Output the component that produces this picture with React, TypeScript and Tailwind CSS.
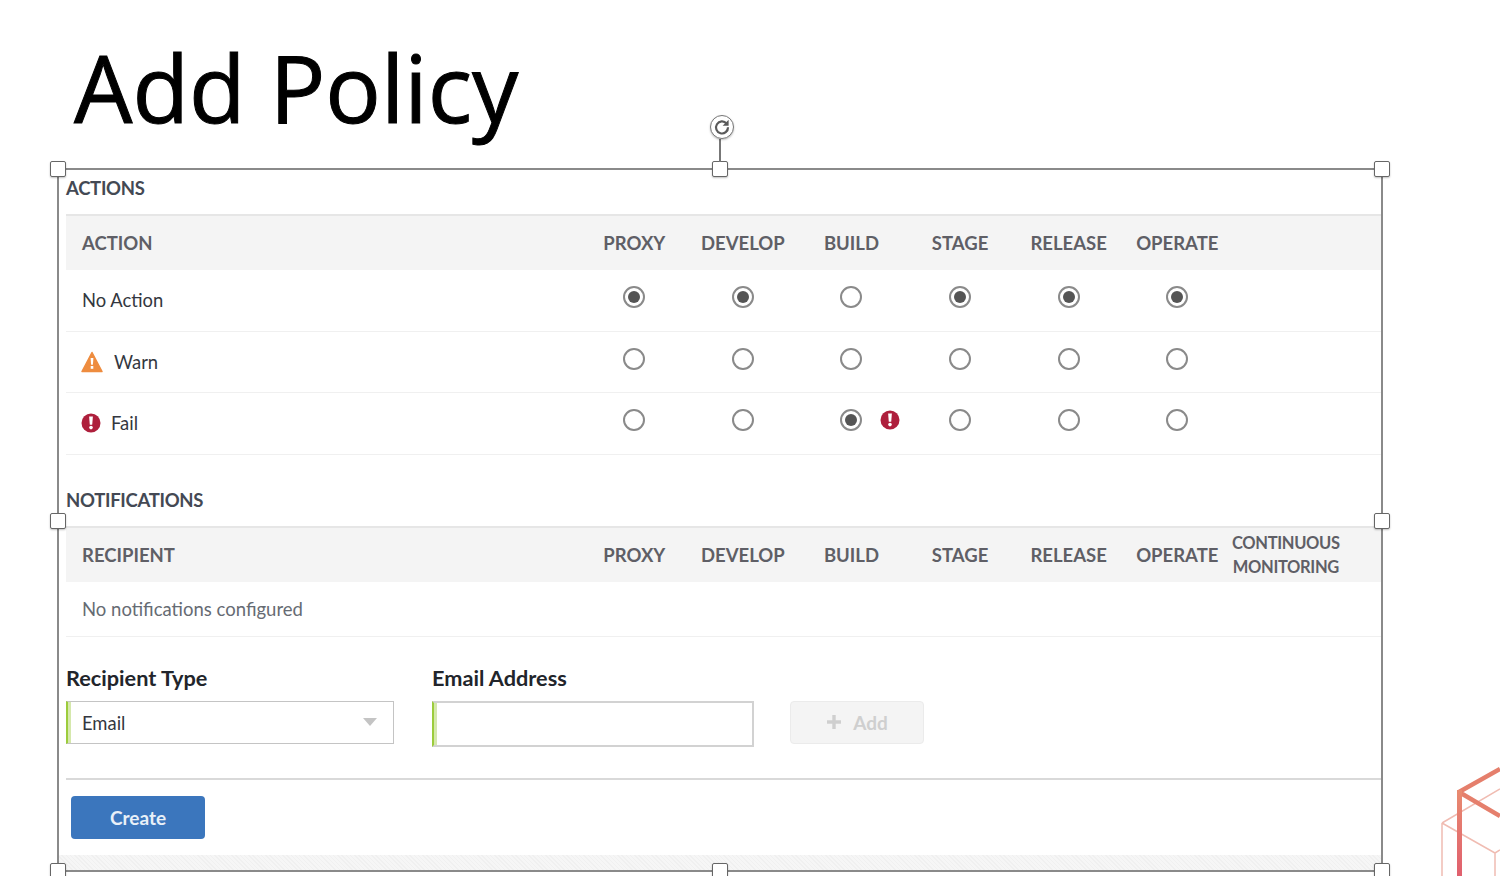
const sans = "font-['Lato','Open_Sans',sans-serif]";

function Radio({ on }: { on?: boolean }) {
  return (
    <span className="flex h-[22px] w-[22px] items-center justify-center rounded-full border-2 border-[#8a8a8a] bg-white">
      {on ? <span className="h-[12px] w-[12px] rounded-full bg-[#555555]" /> : null}
    </span>
  );
}

function FailIcon({ size = 20 }: { size?: number }) {
  return (
    <svg width={size} height={size} viewBox="0 0 20 20" className="shrink-0">
      <circle cx="10" cy="10" r="9.5" fill="#ae1f3c" />
      <path d="M8.1 3.6h3.8l-.7 8.2H8.8z" fill="#fff" />
      <circle cx="10" cy="14.6" r="1.8" fill="#fff" />
    </svg>
  );
}

function WarnIcon() {
  return (
    <svg width="22" height="22" viewBox="0 0 22 22" className="shrink-0">
      <path d="M11 1.5 21 20.5H1z" fill="#ee8c3f" stroke="#ee8c3f" strokeWidth="1.5" strokeLinejoin="round" />
      <path d="M9.6 7h2.8l-.5 6.8h-1.8z" fill="#fff" />
      <rect x="9.7" y="15" width="2.6" height="2.8" fill="#fff" />
    </svg>
  );
}

function Handle({ className }: { className: string }) {
  return (
    <span className={"absolute h-[16px] w-[16px] rounded-[2px] border border-[#666666] bg-white shadow-[0_1px_2px_rgba(0,0,0,0.25)] " + className} />
  );
}

const stages = ["PROXY", "DEVELOP", "BUILD", "STAGE", "RELEASE", "OPERATE"];

function HeaderRow({ first, extra }: { first: string; extra?: boolean }) {
  return (
    <div className="flex h-[56px] items-center border-t-2 border-[#e6e6e6] bg-[#f4f4f4] pt-[2px] text-[18.5px] font-bold text-[#5f5f66]">
      <div className="w-[514px] pl-[16px]">{first}</div>
      {stages.map((s) => (
        <div key={s} className="w-[108.6px] text-center">{s}</div>
      ))}
      {extra ? (
        <div className="mt-[-2px] w-[108.6px] text-center text-[16.5px] leading-[24px] tracking-[-0.35px]">CONTINUOUS<br />MONITORING</div>
      ) : null}
    </div>
  );
}

function ActionRow({ label, icon, on, flag, tight }: { label: string; icon?: React.ReactNode; on: number[]; flag?: boolean; tight?: boolean }) {
  return (
    <div className="flex h-[61.5px] items-center border-b border-[#f0f0f0] text-[18.4px] text-[#333740]">
      <div className="flex w-[514px] items-center pl-[15px]">
        {icon}
        <span className={tight ? "ml-[10px] mt-[2px]" : icon ? "ml-[11px] mt-[2px]" : "ml-[1px] mt-[2px]"}>{label}</span>
      </div>
      {stages.map((s, i) => (
        <div key={s} className="relative mt-[-6px] flex w-[108.6px] justify-center">
          <Radio on={on.includes(i)} />
          {flag && i === 2 ? (
            <span className="absolute left-[83px] top-[1px]"><FailIcon /></span>
          ) : null}
        </div>
      ))}
    </div>
  );
}

export default function App() {
  return (
    <div className={"relative h-[876px] w-[1500px] overflow-hidden bg-white " + sans}>
      <h1 className="h-[168px] pl-[74px] pt-[29px] font-['Open_Sans',sans-serif] text-[92.5px] leading-[116px] font-medium text-black [-webkit-text-stroke:1px_black]">Add Policy</h1>

      <div className="relative ml-[57px] h-[704px] w-[1326px] border-2 border-[#8a8a8a] pl-[7px]">
        <div className="absolute bottom-0 left-0 right-0 h-[15px] bg-[repeating-linear-gradient(45deg,#f0f0f0_0,#f0f0f0_1px,#f6f6f6_1px,#f6f6f6_3px)]" />
        <Handle className="left-[-9px] top-[-9px]" />
        <Handle className="left-[653px] top-[-9px]" />
        <Handle className="right-[-9px] top-[-9px]" />
        <Handle className="left-[-9px] top-[343px]" />
        <Handle className="right-[-9px] top-[343px]" />
        <Handle className="left-[-9px] bottom-[-9px]" />
        <Handle className="left-[653px] bottom-[-9px]" />
        <Handle className="right-[-9px] bottom-[-9px]" />
        <span className="absolute left-[660px] top-[-31px] h-[23px] w-[2px] bg-[#777777]" />
        <span className="absolute left-[651px] top-[-55px] flex h-[24px] w-[24px] items-center justify-center rounded-full border border-[#777777] bg-white shadow-[0_1px_2px_rgba(0,0,0,0.25)]">
          <svg width="18" height="18" viewBox="0 0 18 18" fill="none">
            <path d="M13.6 5.6A6 6 0 1 0 15 9.2" stroke="#5a5a5a" strokeWidth="2.2" />
            <path d="M15.6 1.8v6h-6z" fill="#5a5a5a" />
          </svg>
        </span>

        <div className="flex h-[44px] items-center pb-[6px] text-[18.5px] font-bold tracking-[-0.3px] text-[#444954]">ACTIONS</div>
        <HeaderRow first="ACTION" />
        <ActionRow label="No Action" on={[0, 1, 3, 4, 5]} />
        <ActionRow label="Warn" icon={<WarnIcon />} on={[]} />
        <ActionRow label="Fail" icon={<FailIcon />} on={[2]} flag tight />

        <div className="flex h-[71px] items-end pb-[11px] text-[18.5px] font-bold tracking-[-0.3px] text-[#444954]">NOTIFICATIONS</div>
        <HeaderRow first="RECIPIENT" extra />
        <div className="flex h-[55px] items-center border-b border-[#f0f0f0] pl-[16px] pt-[3px] text-[18.5px] text-[#666b73]">No notifications configured</div>

        <div className="mt-[28px] flex items-start">
          <div className="w-[366px]">
            <div className="text-[21.7px] leading-[26px] font-bold text-[#22252b]">Recipient Type</div>
            <div className="mt-[10px] flex h-[43px] w-[328px] items-center justify-between border border-l-2 border-[#c4c4c4] border-l-[#9ccc3c] pl-[14px] pr-[16px] text-[18.4px] text-[#333740] shadow-[inset_3px_0_0_#d5e8ac]">
              <span className="mt-[3px]">Email</span>
              <svg width="14" height="8" viewBox="0 0 14 8"><path d="M0 0h14L7 8z" fill="#c4c4c4" /></svg>
            </div>
          </div>
          <div className="w-[358px]">
            <div className="text-[21.7px] leading-[26px] font-bold text-[#22252b]">Email Address</div>
            <div className="mt-[10px] h-[46px] w-[322px] border-2 border-l-2 border-[#d2d2d2] border-l-[#9ccc3c] shadow-[inset_3px_0_0_#d5e8ac]" />
          </div>
          <div className="mt-[36px] flex h-[43px] w-[134px] items-center justify-center gap-[11px] rounded-[4px] border border-[#ebebeb] bg-[#f4f4f4] pt-[2px] text-[19px] font-bold text-[#cfcfcf]">
            <svg width="16" height="16" viewBox="0 0 16 16" className="mb-[3px]"><path d="M6.3 1h3.4v5.3H15v3.4H9.7V15H6.3V9.7H1V6.3h5.3z" fill="#cfcfcf" /></svg>
            Add
          </div>
        </div>

        <div className="mt-[31px] border-t-2 border-[#d9d9d9] pl-[5px] pt-[16px]">
          <div className="flex h-[43px] w-[134px] items-center justify-center rounded-[4px] bg-[#3b76bd] pt-[2px] text-[19px] font-bold text-[#e8f0f8]">Create</div>
        </div>
      </div>

      <svg className="absolute left-[1430px] top-[756px]" width="70" height="120" viewBox="0 0 70 120" fill="none">
        <defs>
          <linearGradient id="decor" gradientUnits="userSpaceOnUse" x1="0" y1="35" x2="0" y2="120">
            <stop offset="0" stopColor="#e88a70" />
            <stop offset="1" stopColor="#e0606e" />
          </linearGradient>
        </defs>
        <path d="M12 67 70 33M12 67V120M12 67 65 97V120M65 97 70 94" stroke="#f0bcb2" strokeWidth="1.5" />
        <path d="M29 36 70 13M29 36 70 60" stroke="#e57f6c" strokeWidth="4.5" />
        <rect x="27" y="34" width="5" height="86" fill="url(#decor)" />
      </svg>
    </div>
  );
}
